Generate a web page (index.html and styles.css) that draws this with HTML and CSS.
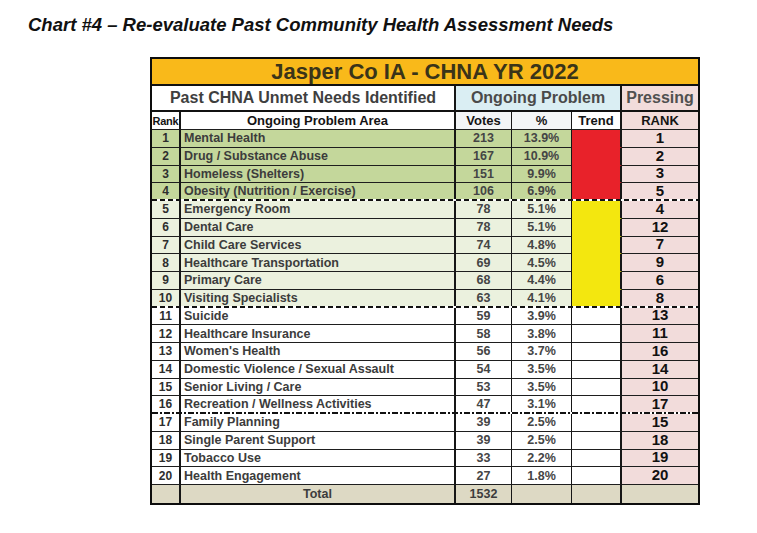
FILE: index.html
```html
<!DOCTYPE html>
<html>
<head>
<meta charset="utf-8">
<link rel="stylesheet" href="styles.css">
</head>
<body>
<div class="page">
  <h1 class="title">Chart #4 – Re-evaluate Past Community Health Assessment Needs</h1>
  <div class="sheet">
    <div class="row r-title"><div class="c full">Jasper Co IA - CHNA YR 2022</div></div>
    <div class="row r-group">
      <div class="c g-past">Past CHNA Unmet Needs Identified</div>
      <div class="c g-ongoing">Ongoing Problem</div>
      <div class="c g-pressing">Pressing</div>
    </div>
    <div class="row r-head">
      <div class="c rank">Rank</div>
      <div class="c area">Ongoing Problem Area</div>
      <div class="c votes">Votes</div>
      <div class="c pct">%</div>
      <div class="c trend">Trend</div>
      <div class="c prank">RANK</div>
    </div>

    <div class="row d g1"><div class="c rank">1</div><div class="c area">Mental Health</div><div class="c votes">213</div><div class="c pct">13.9%</div><div class="c trend red"></div><div class="c prank">1</div></div>
    <div class="row d g1"><div class="c rank">2</div><div class="c area">Drug / Substance Abuse</div><div class="c votes">167</div><div class="c pct">10.9%</div><div class="c trend red"></div><div class="c prank">2</div></div>
    <div class="row d g1"><div class="c rank">3</div><div class="c area">Homeless (Shelters)</div><div class="c votes">151</div><div class="c pct">9.9%</div><div class="c trend red"></div><div class="c prank">3</div></div>
    <div class="row d g1 dash"><div class="c rank">4</div><div class="c area">Obesity (Nutrition / Exercise)</div><div class="c votes">106</div><div class="c pct">6.9%</div><div class="c trend red"></div><div class="c prank">5</div></div>

    <div class="row d g2"><div class="c rank">5</div><div class="c area">Emergency Room</div><div class="c votes">78</div><div class="c pct">5.1%</div><div class="c trend yel"></div><div class="c prank">4</div></div>
    <div class="row d g2"><div class="c rank">6</div><div class="c area">Dental Care</div><div class="c votes">78</div><div class="c pct">5.1%</div><div class="c trend yel"></div><div class="c prank">12</div></div>
    <div class="row d g2"><div class="c rank">7</div><div class="c area">Child Care Services</div><div class="c votes">74</div><div class="c pct">4.8%</div><div class="c trend yel"></div><div class="c prank">7</div></div>
    <div class="row d g2"><div class="c rank">8</div><div class="c area">Healthcare Transportation</div><div class="c votes">69</div><div class="c pct">4.5%</div><div class="c trend yel"></div><div class="c prank">9</div></div>
    <div class="row d g2"><div class="c rank">9</div><div class="c area">Primary Care</div><div class="c votes">68</div><div class="c pct">4.4%</div><div class="c trend yel"></div><div class="c prank">6</div></div>
    <div class="row d g2 dash"><div class="c rank">10</div><div class="c area">Visiting Specialists</div><div class="c votes">63</div><div class="c pct">4.1%</div><div class="c trend yel"></div><div class="c prank">8</div></div>

    <div class="row d g3"><div class="c rank">11</div><div class="c area">Suicide</div><div class="c votes">59</div><div class="c pct">3.9%</div><div class="c trend"></div><div class="c prank">13</div></div>
    <div class="row d g3"><div class="c rank">12</div><div class="c area">Healthcare Insurance</div><div class="c votes">58</div><div class="c pct">3.8%</div><div class="c trend"></div><div class="c prank">11</div></div>
    <div class="row d g3"><div class="c rank">13</div><div class="c area">Women's Health</div><div class="c votes">56</div><div class="c pct">3.7%</div><div class="c trend"></div><div class="c prank">16</div></div>
    <div class="row d g3"><div class="c rank">14</div><div class="c area">Domestic Violence / Sexual Assault</div><div class="c votes">54</div><div class="c pct">3.5%</div><div class="c trend"></div><div class="c prank">14</div></div>
    <div class="row d g3"><div class="c rank">15</div><div class="c area">Senior Living / Care</div><div class="c votes">53</div><div class="c pct">3.5%</div><div class="c trend"></div><div class="c prank">10</div></div>
    <div class="row d g3 dashdot"><div class="c rank">16</div><div class="c area">Recreation / Wellness Activities</div><div class="c votes">47</div><div class="c pct">3.1%</div><div class="c trend"></div><div class="c prank">17</div></div>
    <div class="row d g3"><div class="c rank">17</div><div class="c area">Family Planning</div><div class="c votes">39</div><div class="c pct">2.5%</div><div class="c trend"></div><div class="c prank">15</div></div>
    <div class="row d g3"><div class="c rank">18</div><div class="c area">Single Parent Support</div><div class="c votes">39</div><div class="c pct">2.5%</div><div class="c trend"></div><div class="c prank">18</div></div>
    <div class="row d g3"><div class="c rank">19</div><div class="c area">Tobacco Use</div><div class="c votes">33</div><div class="c pct">2.2%</div><div class="c trend"></div><div class="c prank">19</div></div>
    <div class="row d g3"><div class="c rank">20</div><div class="c area">Health Engagement</div><div class="c votes">27</div><div class="c pct">1.8%</div><div class="c trend"></div><div class="c prank">20</div></div>

    <div class="row d total"><div class="c rank"></div><div class="c area">Total</div><div class="c votes">1532</div><div class="c pct"></div><div class="c trend"></div><div class="c prank"></div></div>
  </div>
</div>
</body>
</html>
```

FILE: styles.css
```css
html, body {
  margin: 0;
  padding: 0;
  background: #ffffff;
}

.page {
  font-family: "Liberation Sans", Arial, sans-serif;
  padding-top: 14px;
}

.title {
  margin: 0 0 0 28px;
  font-size: 18.5px;
  line-height: 22px;
  font-weight: bold;
  font-style: italic;
  color: #111;
  white-space: nowrap;
}

.sheet {
  margin: 21px 0 0 150px;
  width: 550px;
  box-sizing: border-box;
  border: 2px solid #0d0d0d;
  background: #fff;
}

.row {
  display: grid;
  grid-template-columns: 29px 275px 56px 60px 50px 76px;
  box-sizing: border-box;
}

.c {
  box-sizing: border-box;
  border-right: 2px solid #161616;
  border-bottom: 1px solid #1e1e1e;
  display: flex;
  align-items: center;
  justify-content: center;
  font-weight: bold;
  white-space: nowrap;
  min-height: 0;
}

.c.votes, .c.pct { border-right-width: 1px; }
.c.prank { border-right: 0; }

/* title band */
.r-title { height: 27px; }
.r-title .full {
  grid-column: 1 / -1;
  border-right: 0;
  border-bottom: 2px solid #111;
  background: #f9b91a;
  color: #3a3419;
  font-size: 22px;
  padding-top: 1px;
}

/* group headers */
.r-group { height: 26px; }
.r-group .c {
  border-bottom: 2px solid #111;
  font-size: 16px;
}
.g-past {
  grid-column: span 2;
  background: #fff;
  color: #3f3f3f;
}
.g-ongoing {
  grid-column: span 3;
  background: #daeef3;
  color: #4a4a4a;
}
.g-pressing {
  border-right: 0 !important;
  background: #f2dcdb;
  color: #505050;
}

/* column headers */
.r-head { height: 18px; }
.r-head .c {
  font-size: 13px;
  color: #141414;
  background: #fff;
}
.r-head .rank { font-size: 11px; letter-spacing: -0.2px; }
.r-head .votes, .r-head .pct { background: #f3f5f6; }
.r-head .prank { background: #f2dcdb; }

/* data rows */
.row.d { height: 17.75px; }
.d .c {
  font-size: 12.5px;
  line-height: 14px;
  color: #3c3c3c;
}
.d .rank { font-size: 12px; color: #2e2e2e; }
.d .area {
  justify-content: flex-start;
  padding-left: 3px;
}
.d .votes, .d .pct { color: #454545; }
.d .prank {
  background: #f2dcdb;
  color: #111;
  font-size: 15px;
  line-height: 14px;
  padding-bottom: 1px;
}
.row.dash .prank, .row.dashdot .prank { padding-bottom: 0; }

.g1 .rank, .g1 .area, .g1 .votes, .g1 .pct { background: #c4d79b; }
.g2 .rank, .g2 .area, .g2 .votes, .g2 .pct { background: #ebf1de; }

.trend.red { background: #e8222a; border-bottom-color: #e8222a; }
.trend.yel { background: #f3e70f; border-bottom-color: #f3e70f; }

.row.dash, .row.dashdot {
  padding-bottom: 2px;
  background-color: #fff;
  background-repeat: no-repeat;
  background-position: left bottom;
  background-size: 100% 2px;
}
.row.dash {
  background-image: repeating-linear-gradient(90deg, #111 0 5px, transparent 5px 8px);
}
.row.dashdot {
  background-image: repeating-linear-gradient(90deg, #111 0 6px, transparent 6px 8px, #111 8px 10px, transparent 10px 12px);
}
.row.dash .c, .row.dashdot .c { border-bottom: 0; }

/* total */
.row.total { height: 18px; }
.total .c {
  background: #ddd9c4 !important;
  border-bottom: 0;
  color: #3c3c3c;
}
.total .area { justify-content: center; padding-left: 0; }
```
